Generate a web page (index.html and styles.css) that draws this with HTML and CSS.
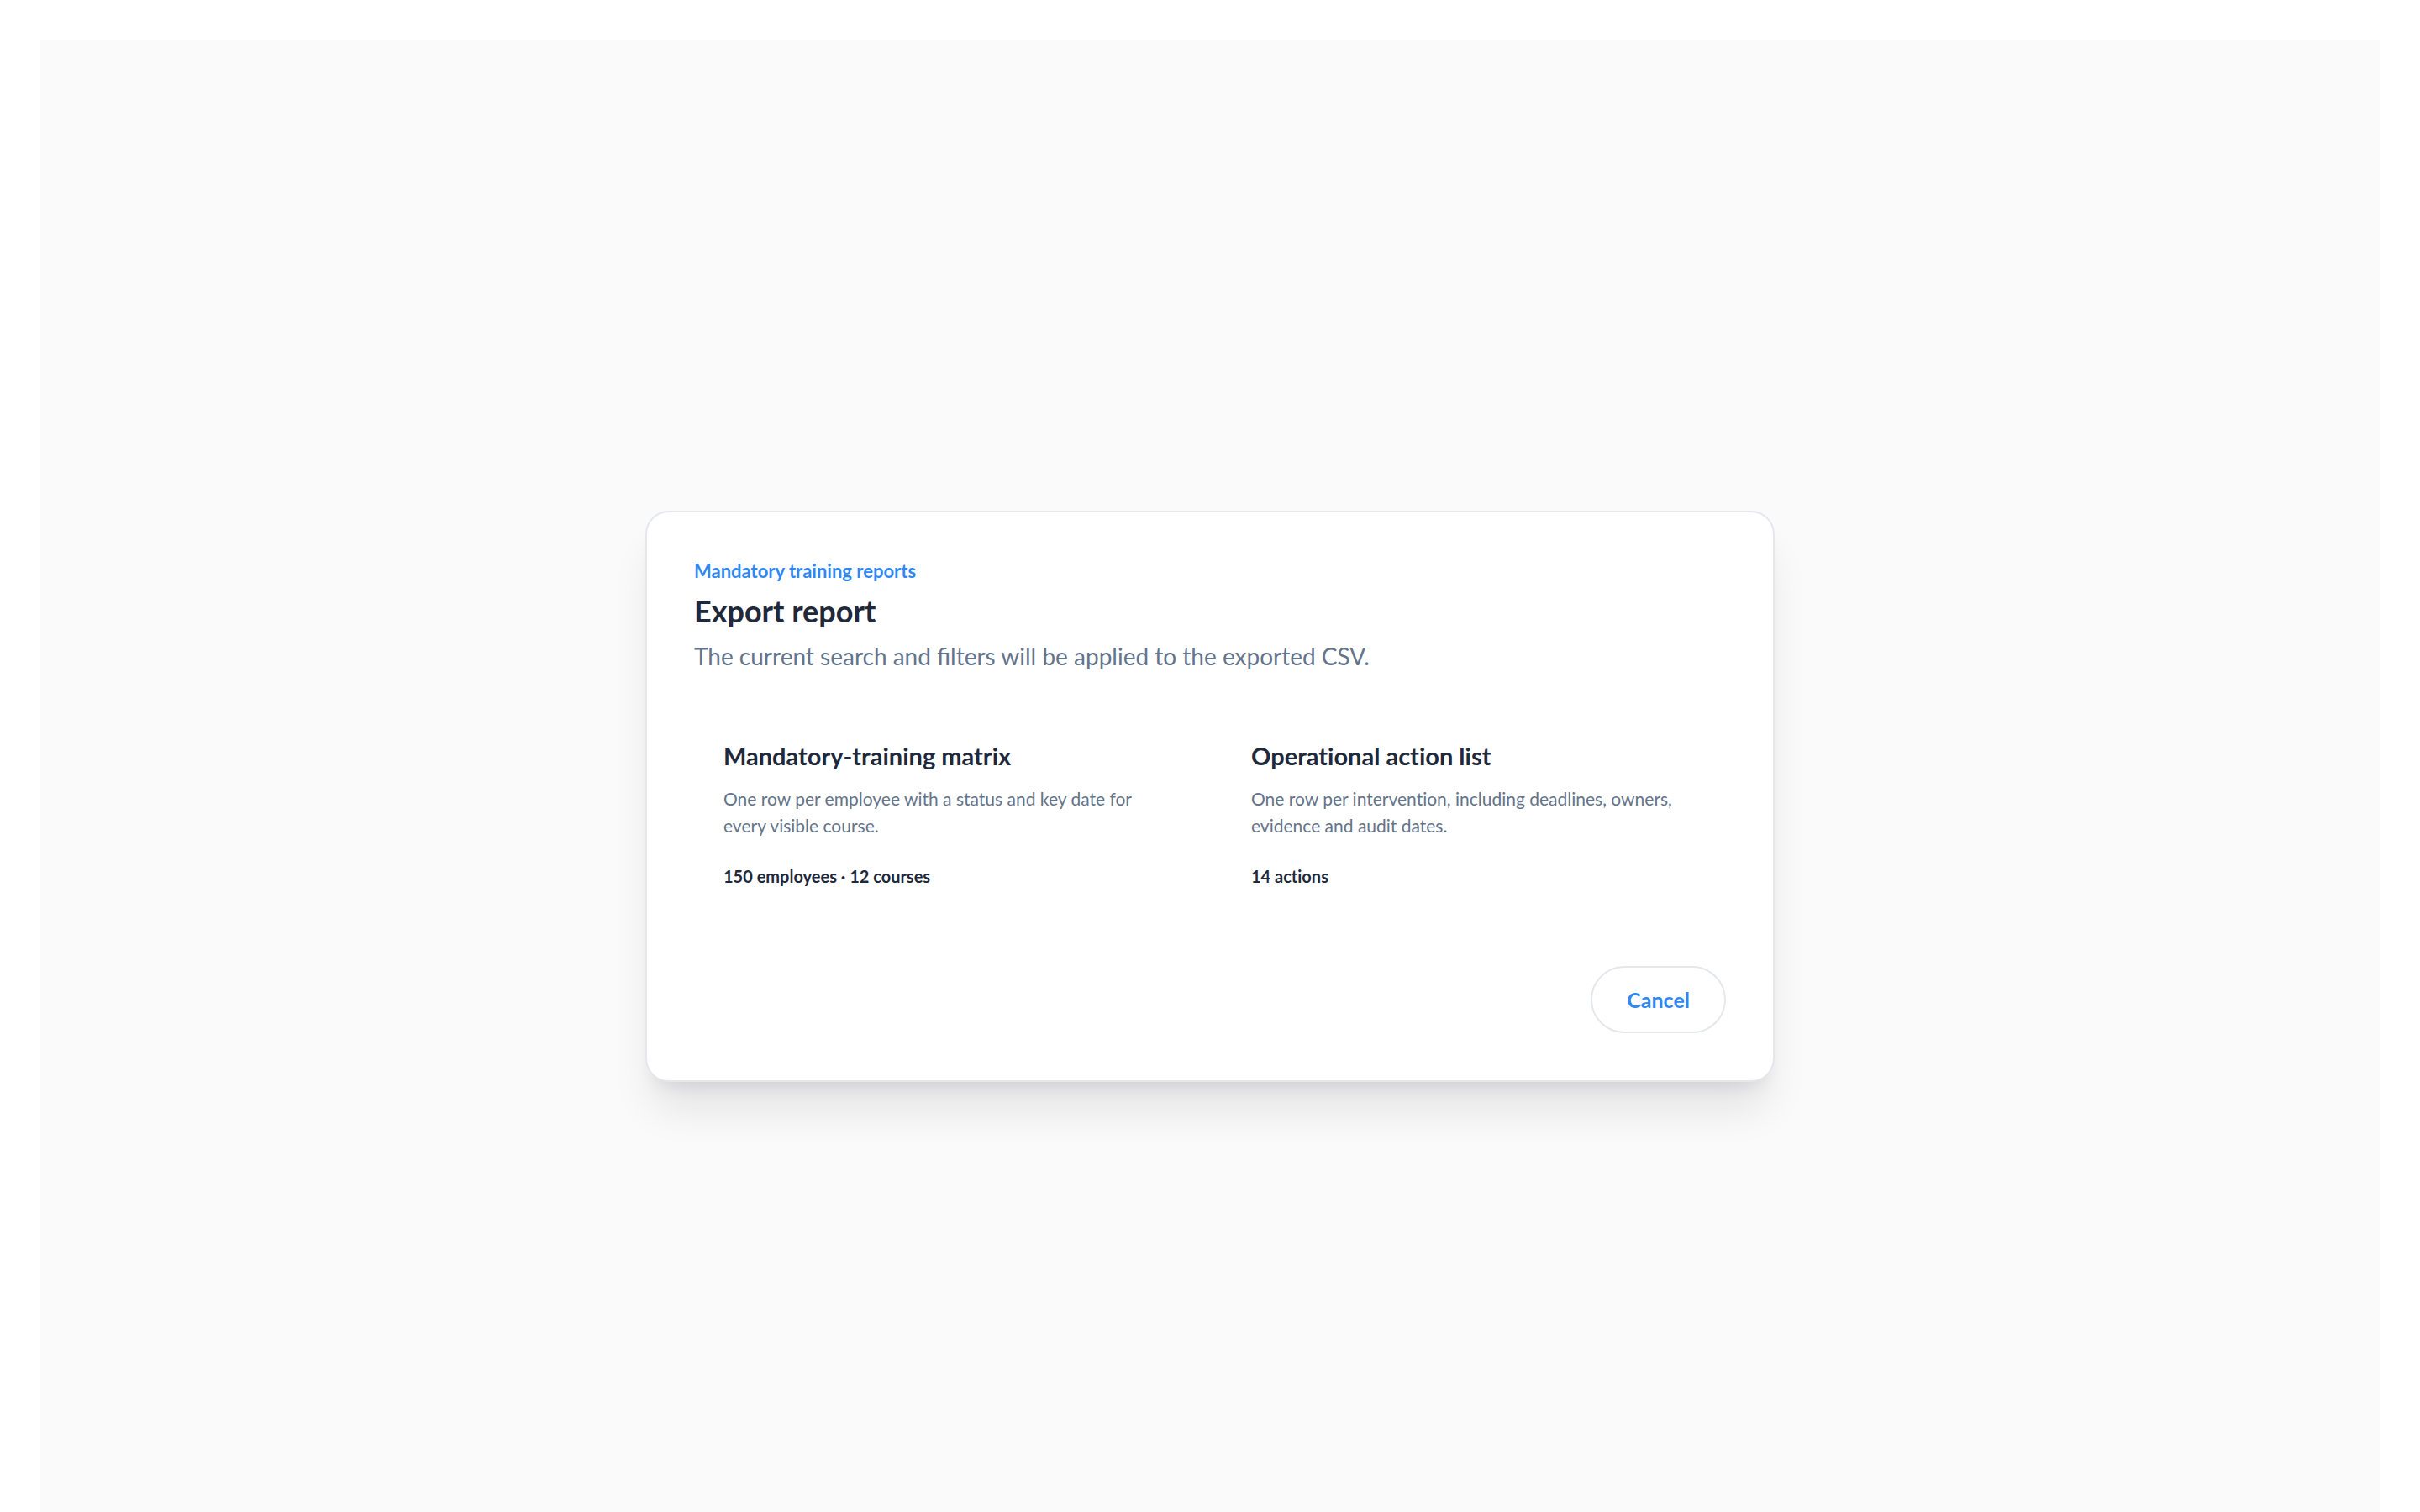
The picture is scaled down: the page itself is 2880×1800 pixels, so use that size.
FILE: index.html
```html
<!DOCTYPE html>
<html lang="en">
<head>
  <meta charset="UTF-8">
  <meta name="viewport" content="width=device-width, initial-scale=1.0">
  <title>Export report</title>
  <link rel="stylesheet" href="styles.css">
</head>
<body>
  <main class="page">
    <section class="dialog" role="dialog" aria-labelledby="dialog-title">
      <header>
        <p class="eyebrow">Mandatory training reports</p>
        <h1 class="title" id="dialog-title">Export report</h1>
        <p class="description">The current search and filters will be applied to the exported CSV.</p>
      </header>

      <div class="options">
        <button type="button" class="option">
          <span class="option-title">Mandatory-training matrix</span>
          <span class="option-text">One row per employee with a status and key date for every visible course.</span>
          <span class="option-meta">150 employees · 12 courses</span>
        </button>
        <button type="button" class="option">
          <span class="option-title">Operational action list</span>
          <span class="option-text">One row per intervention, including deadlines, owners, evidence and audit dates.</span>
          <span class="option-meta">14 actions</span>
        </button>
      </div>

      <footer class="actions">
        <button type="button" class="cancel">Cancel</button>
      </footer>
    </section>
  </main>
</body>
</html>
```

FILE: styles.css
```css
* {
  box-sizing: border-box;
}
body {
  margin: 0;
  padding: 48px 48px 0;
  background: #fff;
  color: #1e293b;
  font-family: Lato, "Liberation Sans", sans-serif;
}
button {
  font-family: inherit;
  cursor: pointer;
}
.page {
  display: flex;
  align-items: center;
  justify-content: center;
  min-height: 100vh;
  background: #fafafa;
}
.dialog {
  width: 100%;
  max-width: 1344px;
  padding: 56px;
  background: #fff;
  border: 2px solid #e5e7eb;
  border-radius: 28px;
  box-shadow: 0 40px 50px -10px rgba(15, 23, 42, 0.1), 0 16px 20px -12px rgba(15, 23, 42, 0.1);
}
.eyebrow {
  margin: 0;
  font-size: 22px;
  line-height: 28px;
  font-weight: 700;
  color: #2f88f2;
}
.title {
  margin: 8px 0;
  font-size: 36px;
  line-height: 50px;
  font-weight: 700;
}
.description {
  margin: 0;
  font-size: 28px;
  line-height: 42px;
  color: #64748b;
}
.options {
  display: grid;
  grid-template-columns: 1fr 1fr;
  gap: 28px;
  margin-top: 42px;
}
.option {
  display: flex;
  flex-direction: column;
  padding: 35px;
  background: none;
  border: none;
  border-radius: 28px;
  color: inherit;
  text-align: left;
  font-variant-ligatures: none;
}
.option-title {
  font-size: 29px;
  line-height: 42px;
  font-weight: 700;
}
.option-text {
  margin-top: 14px;
  font-size: 21px;
  line-height: 32px;
  color: #64748b;
}
.option-meta {
  margin-top: 28px;
  font-size: 20px;
  line-height: 32px;
  font-weight: 700;
}
.actions {
  display: flex;
  justify-content: flex-end;
  margin-top: 56px;
}
.cancel {
  padding: 20px 41px;
  background: #fff;
  border: 2px solid #e5e7eb;
  border-radius: 40px;
  font-size: 25px;
  line-height: 36px;
  font-weight: 700;
  color: #2f88f2;
}
```
